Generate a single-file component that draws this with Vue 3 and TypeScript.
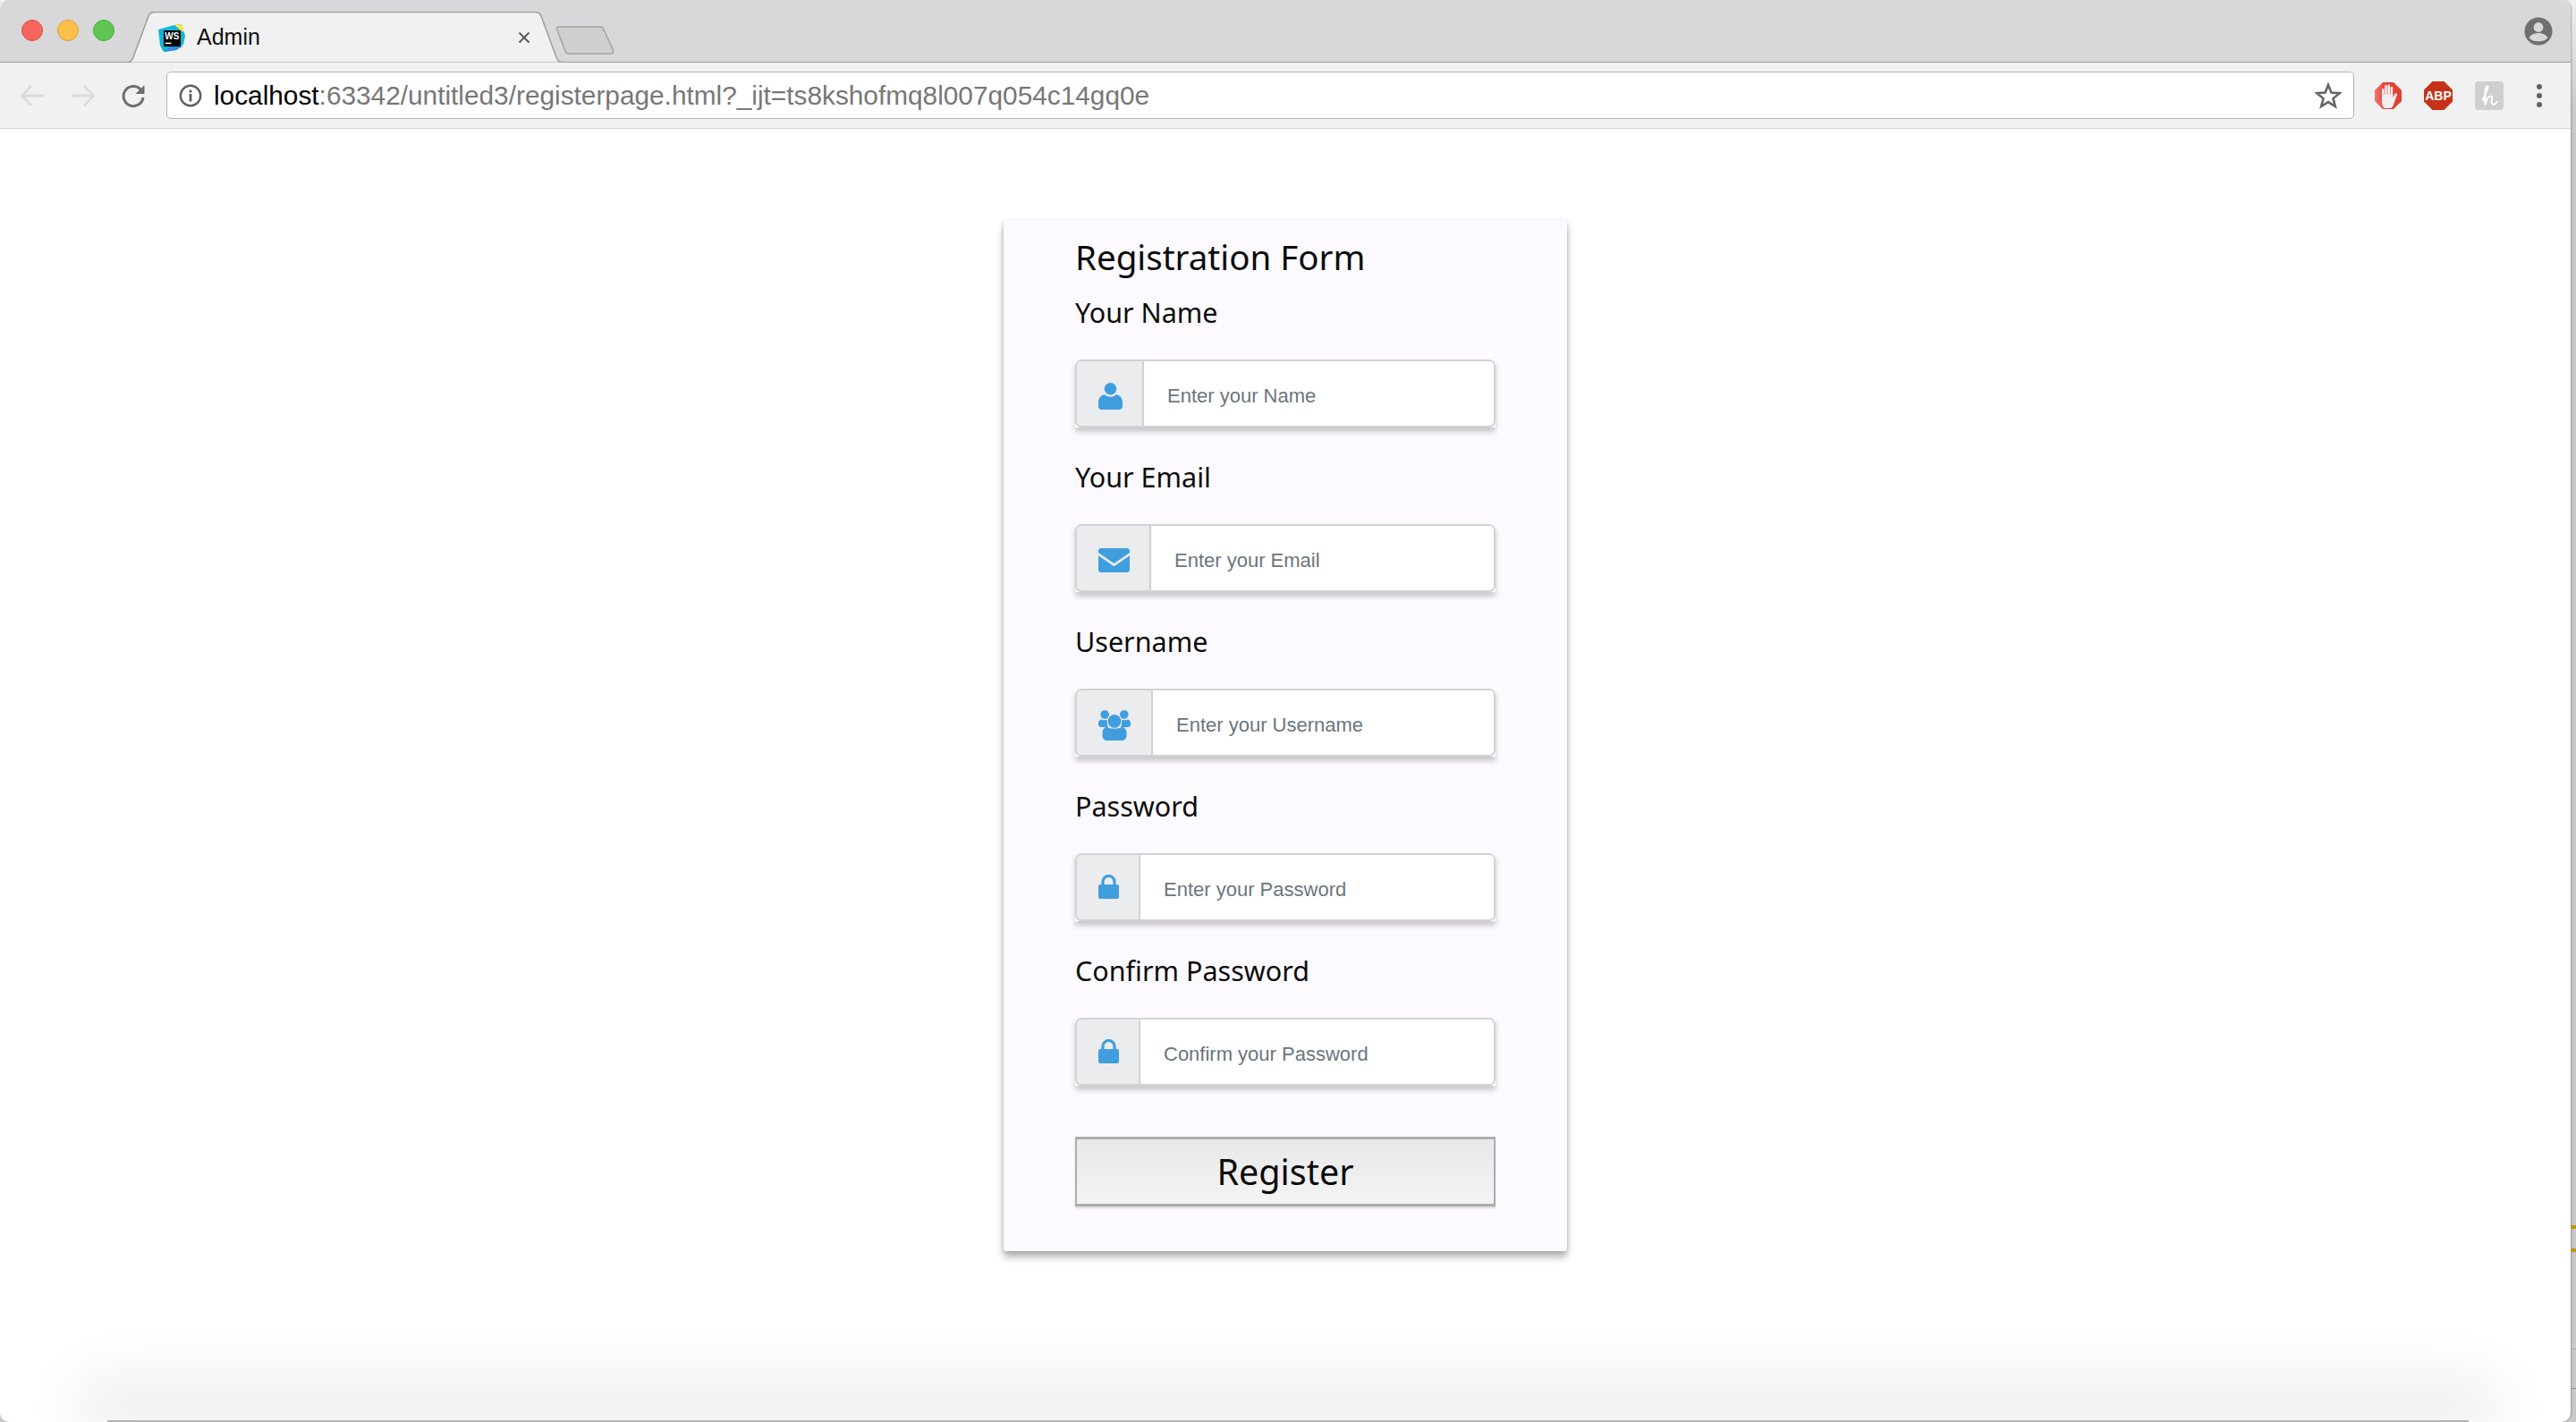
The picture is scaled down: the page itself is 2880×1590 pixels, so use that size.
<script setup lang="ts">
const fields = [
  { label: 'Your Name', placeholder: 'Enter your Name', icon: 'user', addon: 75 },
  { label: 'Your Email', placeholder: 'Enter your Email', icon: 'mail', addon: 83 },
  { label: 'Username', placeholder: 'Enter your Username', icon: 'users', addon: 85 },
  { label: 'Password', placeholder: 'Enter your Password', icon: 'lock', addon: 71 },
  { label: 'Confirm Password', placeholder: 'Confirm your Password', icon: 'lock', addon: 71 },
]
</script>

<template>
  <div class="window">
    <div class="chrome">
      <div class="titlebar">
        <div class="lights">
          <span class="light red"></span>
          <span class="light yellow"></span>
          <span class="light green"></span>
        </div>
        <div class="tab">
          <svg class="tab-shape" viewBox="0 0 490 57" preserveAspectRatio="none">
            <path d="M0 56.5H2Q5 56 7 51L24 5Q26 .5 31 .5H457Q461 .5 463 5L480 51Q482 56 485 56.5H490" fill="#f1f1f1" stroke="#9b9b9b" stroke-width="1.5" />
          </svg>
          <svg class="favicon" viewBox="0 0 30 32">
            <path d="M0 7L18 2L26 1L30 14L28 24L20 30L6 32L2 25Z" fill="#14b4d8" />
            <path d="M18 2L26 1L29 10L25 8Z" fill="#f4e850" />
            <path d="M14 26H27L20 30L6 32Z" fill="#2c8fe2" />
            <rect x="6" y="8" width="19" height="18" fill="#000" />
            <text x="7.2" y="17.5" class="favicon-text">WS</text>
            <rect x="8" y="21.6" width="6.5" height="1.6" fill="#fff" />
          </svg>
          <span class="tab-title">Admin</span>
          <svg class="tab-close" viewBox="0 0 14 14">
            <path d="M1.5 1.5L12.5 12.5M12.5 1.5L1.5 12.5" stroke="#555" stroke-width="1.8" fill="none" />
          </svg>
        </div>
        <svg class="new-tab" viewBox="0 0 66 32">
          <path d="M1.5 3.5Q1 1 4 1H50Q53 1 54 4L64.5 27Q65.5 31 62 31H15Q12 31 11 28Z" fill="#cfcfd0" stroke="#a2a2a3" stroke-width="1.5" />
        </svg>
        <svg class="profile" viewBox="0 0 32 32">
          <circle cx="16" cy="16" r="15.5" fill="#6f6f6f" />
          <circle cx="16" cy="11.5" r="5.4" fill="#d8d8da" />
          <path d="M5.5 23.2C7.5 19.4 12 18 16 18C20 18 24.5 19.4 26.5 23.2C24 26.3 20 27.2 16 27.2C12 27.2 8 26.3 5.5 23.2Z" fill="#d8d8da" />
        </svg>
      </div>

      <div class="toolbar">
        <svg class="nav back" viewBox="0 0 28 26">
          <path d="M13 2L2.5 13L13 24M3 13H27" stroke="#dcdcdc" stroke-width="3" fill="none" />
        </svg>
        <svg class="nav forward" viewBox="0 0 28 26">
          <path d="M15 2L25.5 13L15 24M25 13H1" stroke="#dcdcdc" stroke-width="3" fill="none" />
        </svg>
        <svg class="nav reload" viewBox="0 0 28 28">
          <path d="M22.5 7.5A11 11 0 1 0 25 16" stroke="#6e6e6e" stroke-width="3" fill="none" />
          <path d="M26.5 2V12H16.5Z" fill="#6e6e6e" />
        </svg>
        <div class="omnibox">
          <svg class="info" viewBox="0 0 26 26">
            <circle cx="13" cy="13" r="11.2" stroke="#5f5f5f" stroke-width="2.4" fill="none" />
            <rect x="11.6" y="11" width="2.8" height="8.5" fill="#5f5f5f" />
            <rect x="11.6" y="6.6" width="2.8" height="2.8" fill="#5f5f5f" />
          </svg>
          <span class="url"><span class="host">localhost</span>:63342/untitled3/registerpage.html?_ijt=ts8kshofmq8l007q054c14gq0e</span>
          <svg class="star" viewBox="0 0 30 30">
            <path d="M15 3L18.4 11.6L27.6 12.2L20.5 18.1L22.8 27L15 22.1L7.2 27L9.5 18.1L2.4 12.2L11.6 11.6Z" stroke="#666" stroke-width="2.6" fill="none" />
          </svg>
        </div>
        <div class="extensions">
          <svg class="ext" viewBox="0 0 30 30">
            <defs>
              <linearGradient id="stop-red" x1="0" x2="1" y1="0" y2="0">
                <stop offset="0" stop-color="#f0776c" />
                <stop offset=".35" stop-color="#e6473d" />
                <stop offset="1" stop-color="#e23b32" />
              </linearGradient>
            </defs>
            <path d="M9 0H21L30 9V21L21 30H9L0 21V9Z" fill="url(#stop-red)" />
            <rect x="8" y="7" width="2.6" height="12" rx="1.3" fill="#f7eeee" />
            <rect x="11.2" y="3" width="2.6" height="14" rx="1.3" fill="#f7eeee" />
            <rect x="14.4" y="2.5" width="2.6" height="14" rx="1.3" fill="#f7eeee" />
            <rect x="17.6" y="5" width="2.6" height="12" rx="1.3" fill="#f7eeee" />
            <path d="M8 14H20.2V17L23 12.6C23.8 11.8 25.4 12.4 25 13.8L22 22C21 26 19.5 29 17 29H12C9.5 29 8 26 8 22Z" fill="#f7eeee" />
          </svg>
          <svg class="ext abp" viewBox="0 0 32 32">
            <path d="M9.5 0H22.5L32 9.5V22.5L22.5 32H9.5L0 22.5V9.5Z" fill="#c7311a" />
            <text x="16" y="21" class="abp-text">ABP</text>
          </svg>
          <svg class="ext abp" viewBox="0 0 32 32">
            <rect width="32" height="32" rx="4" fill="#cfcfcf" />
            <path d="M9 21C11 14 16 6 14 5.5C11.5 5 11 15 11.5 26C13 20 15.5 16 18 16.5C21 17.2 16.5 24 20 25.5C22 26.2 23.5 25 25 23" stroke="#fff" stroke-width="2" fill="none" stroke-linecap="round" />
          </svg>
          <svg class="menu" viewBox="0 0 8 32">
            <circle cx="4" cy="6" r="3" fill="#636363" />
            <circle cx="4" cy="16" r="3" fill="#636363" />
            <circle cx="4" cy="26" r="3" fill="#636363" />
          </svg>
        </div>
      </div>

      <div class="page">
        <form class="card" @submit.prevent>
          <h2 class="heading">Registration Form</h2>
          <div v-for="f in fields" :key="f.label" class="field">
            <label class="label">{{ f.label }}</label>
            <div class="input-group">
              <div class="input-inner">
                <div class="addon" :style="{ width: f.addon + 'px' }">
                  <svg v-if="f.icon === 'user'" class="icon" width="27" height="30" viewBox="0 0 27 30">
                    <circle cx="13.5" cy="6.8" r="6.8" fill="#409ede" />
                    <path d="M7 13C9.5 16.5 17.5 16.5 20 13C24.5 14 27 17.5 27 22V26C27 28.5 25.5 30 23 30H4C1.5 30 0 28.5 0 26V22C0 17.5 2.5 14 7 13Z" fill="#409ede" />
                  </svg>
                  <svg v-else-if="f.icon === 'mail'" class="icon" width="35" height="27" viewBox="0 0 35 27">
                    <path d="M3 0H32C33.8 0 35 1.2 35 3V5L17.5 17L0 5V3C0 1.2 1.2 0 3 0Z" fill="#409ede" />
                    <path d="M0 8.2L17.5 20.2L35 8.2V24C35 25.8 33.8 27 32 27H3C1.2 27 0 25.8 0 24Z" fill="#409ede" />
                  </svg>
                  <svg v-else-if="f.icon === 'users'" class="icon" width="36" height="34" viewBox="0 0 36 34">
                    <circle cx="7.2" cy="5" r="4.8" fill="#409ede" />
                    <circle cx="28.8" cy="5" r="4.8" fill="#409ede" />
                    <path d="M3 10.5C4.5 11.5 8 11.5 10 10.8C9.5 14 10 17 11 19H3C1 19 0 18 0 16V14C0 12.5 1.2 11 3 10.5Z" fill="#409ede" />
                    <path d="M33 10.5C31.5 11.5 28 11.5 26 10.8C26.5 14 26 17 25 19H33C35 19 36 18 36 16V14C36 12.5 34.8 11 33 10.5Z" fill="#409ede" />
                    <circle cx="18" cy="12.4" r="8.4" fill="#ebecee" />
                    <circle cx="18" cy="12.4" r="7.4" fill="#409ede" />
                    <path d="M9.5 18.5C12 21.5 24 21.5 26.5 18.5C29.5 19.5 31.5 22 31.5 25.5V28C31.5 32 29 34 26 34H10C7 34 4.5 32 4.5 28V25.5C4.5 22 6.5 19.5 9.5 18.5Z" fill="#409ede" />
                  </svg>
                  <svg v-else class="icon lock" width="23" height="27" viewBox="0 0 23 27">
                    <path d="M5 12V8A6.5 6.5 0 0 1 18 8V12" stroke="#409ede" stroke-width="3.2" fill="none" />
                    <rect y="11" width="23" height="16" rx="2" fill="#409ede" />
                  </svg>
                </div>
                <input class="control" type="text" :placeholder="f.placeholder" />
              </div>
            </div>
          </div>
          <button class="register" type="submit">Register</button>
        </form>
      </div>

      <div class="dock-glow"></div>
    </div>
    <span class="tick one"></span>
    <span class="tick two"></span>
    <span class="tick three"></span>
    <span class="tick four"></span>
  </div>
</template>

<style>
html, body { margin: 0; background: #fff; }
</style>

<style scoped>
.window { position: relative; width: 2880px; height: 1590px; overflow: hidden; background: linear-gradient(#efefef 0, #c9c9c9 130px); font-family: "Liberation Sans", Arial, sans-serif; }
.chrome { position: relative; width: 2874px; height: 1590px; overflow: hidden; display: flex; flex-direction: column; background: #fff; border-radius: 10px; box-shadow: 1px 0 2px rgba(0, 0, 0, .25); }
.titlebar { height: 69px; flex: none; display: flex; align-items: flex-start; background: #d8d8da; border-bottom: 1px solid #9d9d9d; position: relative; }
.lights { display: flex; gap: 16px; padding: 22px 0 0 24px; }
.light { width: 24px; height: 24px; border-radius: 50%; box-sizing: border-box; }
.red { background: #f4665c; border: 1px solid #de4d44; }
.yellow { background: #fbbf4c; border: 1px solid #dfa133; }
.green { background: #5fc652; border: 1px solid #4aad3f; }
.tab { position: absolute; left: 142px; top: 13px; width: 490px; height: 57px; display: flex; align-items: center; }
.tab-shape { position: absolute; inset: 0; width: 100%; height: 100%; }
.favicon { position: relative; width: 30px; height: 32px; margin-left: 35px; }
.favicon-text { font: 700 10px "Liberation Sans", sans-serif; fill: #fff; }
.tab-title { position: relative; margin-left: 13px; font-size: 25px; color: #111; }
.tab-close { position: absolute; left: 437px; top: 22px; width: 14px; height: 14px; }
.new-tab { position: absolute; left: 621px; top: 29px; width: 66px; height: 32px; }
.profile { position: absolute; left: 2822px; top: 19px; width: 32px; height: 32px; }

.toolbar { height: 73px; flex: none; display: flex; align-items: center; background: #f1f1f1; border-bottom: 1px solid #d0d0d0; }
.nav { flex: none; }
.back { width: 28px; height: 26px; margin-left: 22px; }
.forward { width: 28px; height: 26px; margin-left: 29px; }
.reload { width: 28px; height: 28px; margin-left: 28px; }
.omnibox { width: 2446px; height: 53px; margin-left: 23px; box-sizing: border-box; display: flex; align-items: center; background: #fff; border: 1px solid #b4b4b4; border-radius: 5px; }
.info { width: 26px; height: 26px; margin-left: 13px; flex: none; }
.url { margin-left: 13px; font-size: 29.8px; color: #777; white-space: nowrap; }
.host { color: #000; }
.star { width: 30px; height: 30px; margin-left: auto; margin-right: 13px; }
.extensions { display: flex; align-items: center; margin-left: 23px; }
.ext { width: 30px; height: 30px; flex: none; }
.abp { width: 32px; height: 32px; margin-left: 25px; }
.abp-text { font: 700 14px "Liberation Sans", sans-serif; fill: #fff; text-anchor: middle; }
.menu { width: 8px; height: 32px; margin-left: 36px; flex: none; }

.page { flex: 1; display: flex; justify-content: center; align-items: flex-start; padding-top: 102px; }
.card { width: 630px; height: 1153px; box-sizing: border-box; padding: 16px 80px 0; background: #fcfafe; border-radius: 3px; box-shadow: 0 7px 8px rgba(0, 0, 0, .28), 0 1px 4px rgba(0, 0, 0, .16); font-family: "Noto Sans", "Open Sans", sans-serif; color: #0c0c0c; }
.heading { margin: 0; font-size: 38.5px; font-weight: 400; line-height: 50px; }
.field { height: 184px; padding-top: 15px; box-sizing: border-box; }
.label { display: block; font-size: 30.5px; line-height: 44px; }
.input-group { height: 76px; margin-top: 31px; background: #fff; box-shadow: 0 5px 6px rgba(0, 0, 0, .2); }
.input-inner { height: 100%; box-sizing: border-box; display: flex; background: #fff; border: 2px solid #d2d2d6; border-radius: 7px; overflow: hidden; }
.addon { flex: none; box-sizing: border-box; display: flex; align-items: center; padding-left: 24px; background: #ebecee; border-right: 2px solid #d2d2d6; }
.icon { flex: none; display: block; margin-top: 5px; }
.icon.lock { margin-top: -2px; }
.control { flex: 1; min-width: 0; padding: 6px 0 0 26px; border: none; outline: none; background: #fff; font: 22px "Liberation Sans", Arial, sans-serif; }
.control::placeholder { color: #6c757d; opacity: 1; }
.register { display: block; width: 470px; height: 78px; margin-top: 39px; box-sizing: border-box; border-style: solid; border-color: #aeaeae; border-width: 3px 2px; border-radius: 0; background: linear-gradient(#e8e8e8, #f4f4f4); box-shadow: 0 2px 2px rgba(0, 0, 0, .14); font-family: "Noto Sans", "Open Sans", sans-serif; font-size: 39.5px; color: #0c0c0c; padding: 0; }

.dock-glow { position: absolute; left: 120px; right: 114px; bottom: 0; height: 2px; background: #b5b5b5; box-shadow: 0 -17px 64px 32px rgba(0, 0, 0, .07); }
.tick { position: absolute; left: 2874px; width: 6px; }
.one { top: 1370px; height: 4px; background: #b89a08; }
.two { top: 1396px; height: 4px; background: #b89a08; }
.three { top: 1508px; height: 1px; background: #a9a9a9; }
.four { top: 1552px; height: 1px; background: #8f8f8f; }
</style>
